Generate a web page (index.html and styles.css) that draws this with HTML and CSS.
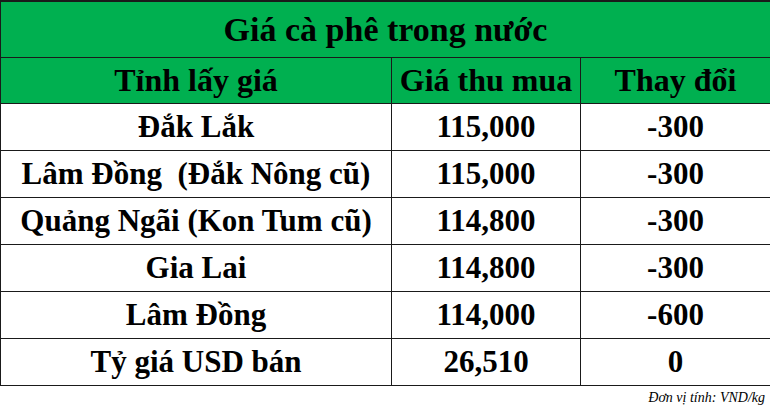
FILE: index.html
```html
<!DOCTYPE html>
<html>
<head>
<meta charset="utf-8">
<title>test</title>
<link rel="stylesheet" href="styles.css">
</head>
<body>
<table class="price-table">
  <colgroup>
    <col class="col-province">
    <col class="col-price">
    <col class="col-change">
  </colgroup>
  <tr>
    <th class="cell title-cell" colspan="3">Giá cà phê trong nước</th>
  </tr>
  <tr>
    <th class="cell head-cell">Tỉnh lấy giá</th>
    <th class="cell head-cell">Giá thu mua</th>
    <th class="cell head-cell">Thay đổi</th>
  </tr>
  <tr><td class="cell body-cell">Đắk Lắk</td><td class="cell body-cell">115,000</td><td class="cell body-cell">-300</td></tr>
  <tr><td class="cell body-cell">Lâm Đồng&nbsp; (Đắk Nông cũ)</td><td class="cell body-cell">115,000</td><td class="cell body-cell">-300</td></tr>
  <tr><td class="cell body-cell">Quảng Ngãi (Kon Tum cũ)</td><td class="cell body-cell">114,800</td><td class="cell body-cell">-300</td></tr>
  <tr><td class="cell body-cell">Gia Lai</td><td class="cell body-cell">114,800</td><td class="cell body-cell">-300</td></tr>
  <tr><td class="cell body-cell">Lâm Đồng</td><td class="cell body-cell">114,000</td><td class="cell body-cell">-600</td></tr>
  <tr><td class="cell body-cell">Tỷ giá USD bán</td><td class="cell body-cell">26,510</td><td class="cell body-cell">0</td></tr>
</table>
<p class="unit">Đơn vị tính: VND/kg</p>
</body>
</html>
```
FILE: styles.css
```css
body {
  margin: 0;
}

.price-table {
  width: 770px;
  border-collapse: collapse;
  table-layout: fixed;
}

.col-province { width: 391px; }
.col-price { width: 189px; }
.col-change { width: 190px; }

.cell {
  font-family: "Liberation Serif";
  color: #000000;
  border: 1px solid #1a1a1a;
  padding: 0;
  text-align: center;
  vertical-align: middle;
  font-weight: bold;
  white-space: nowrap;
}

.title-cell {
  background: #00b050;
  height: 55px;
  font-size: 34px;
  border-top-width: 2px;
}

.head-cell {
  background: #00b050;
  height: 45px;
  font-size: 32px;
}

.body-cell {
  height: 46px;
  font-size: 31px;
}

.unit {
  font-family: "Liberation Serif";
  color: #000000;
  margin: 0;
  padding: 4px 5px 0 0;
  width: 765px;
  text-align: right;
  font-style: italic;
  font-size: 14px;
}
```
